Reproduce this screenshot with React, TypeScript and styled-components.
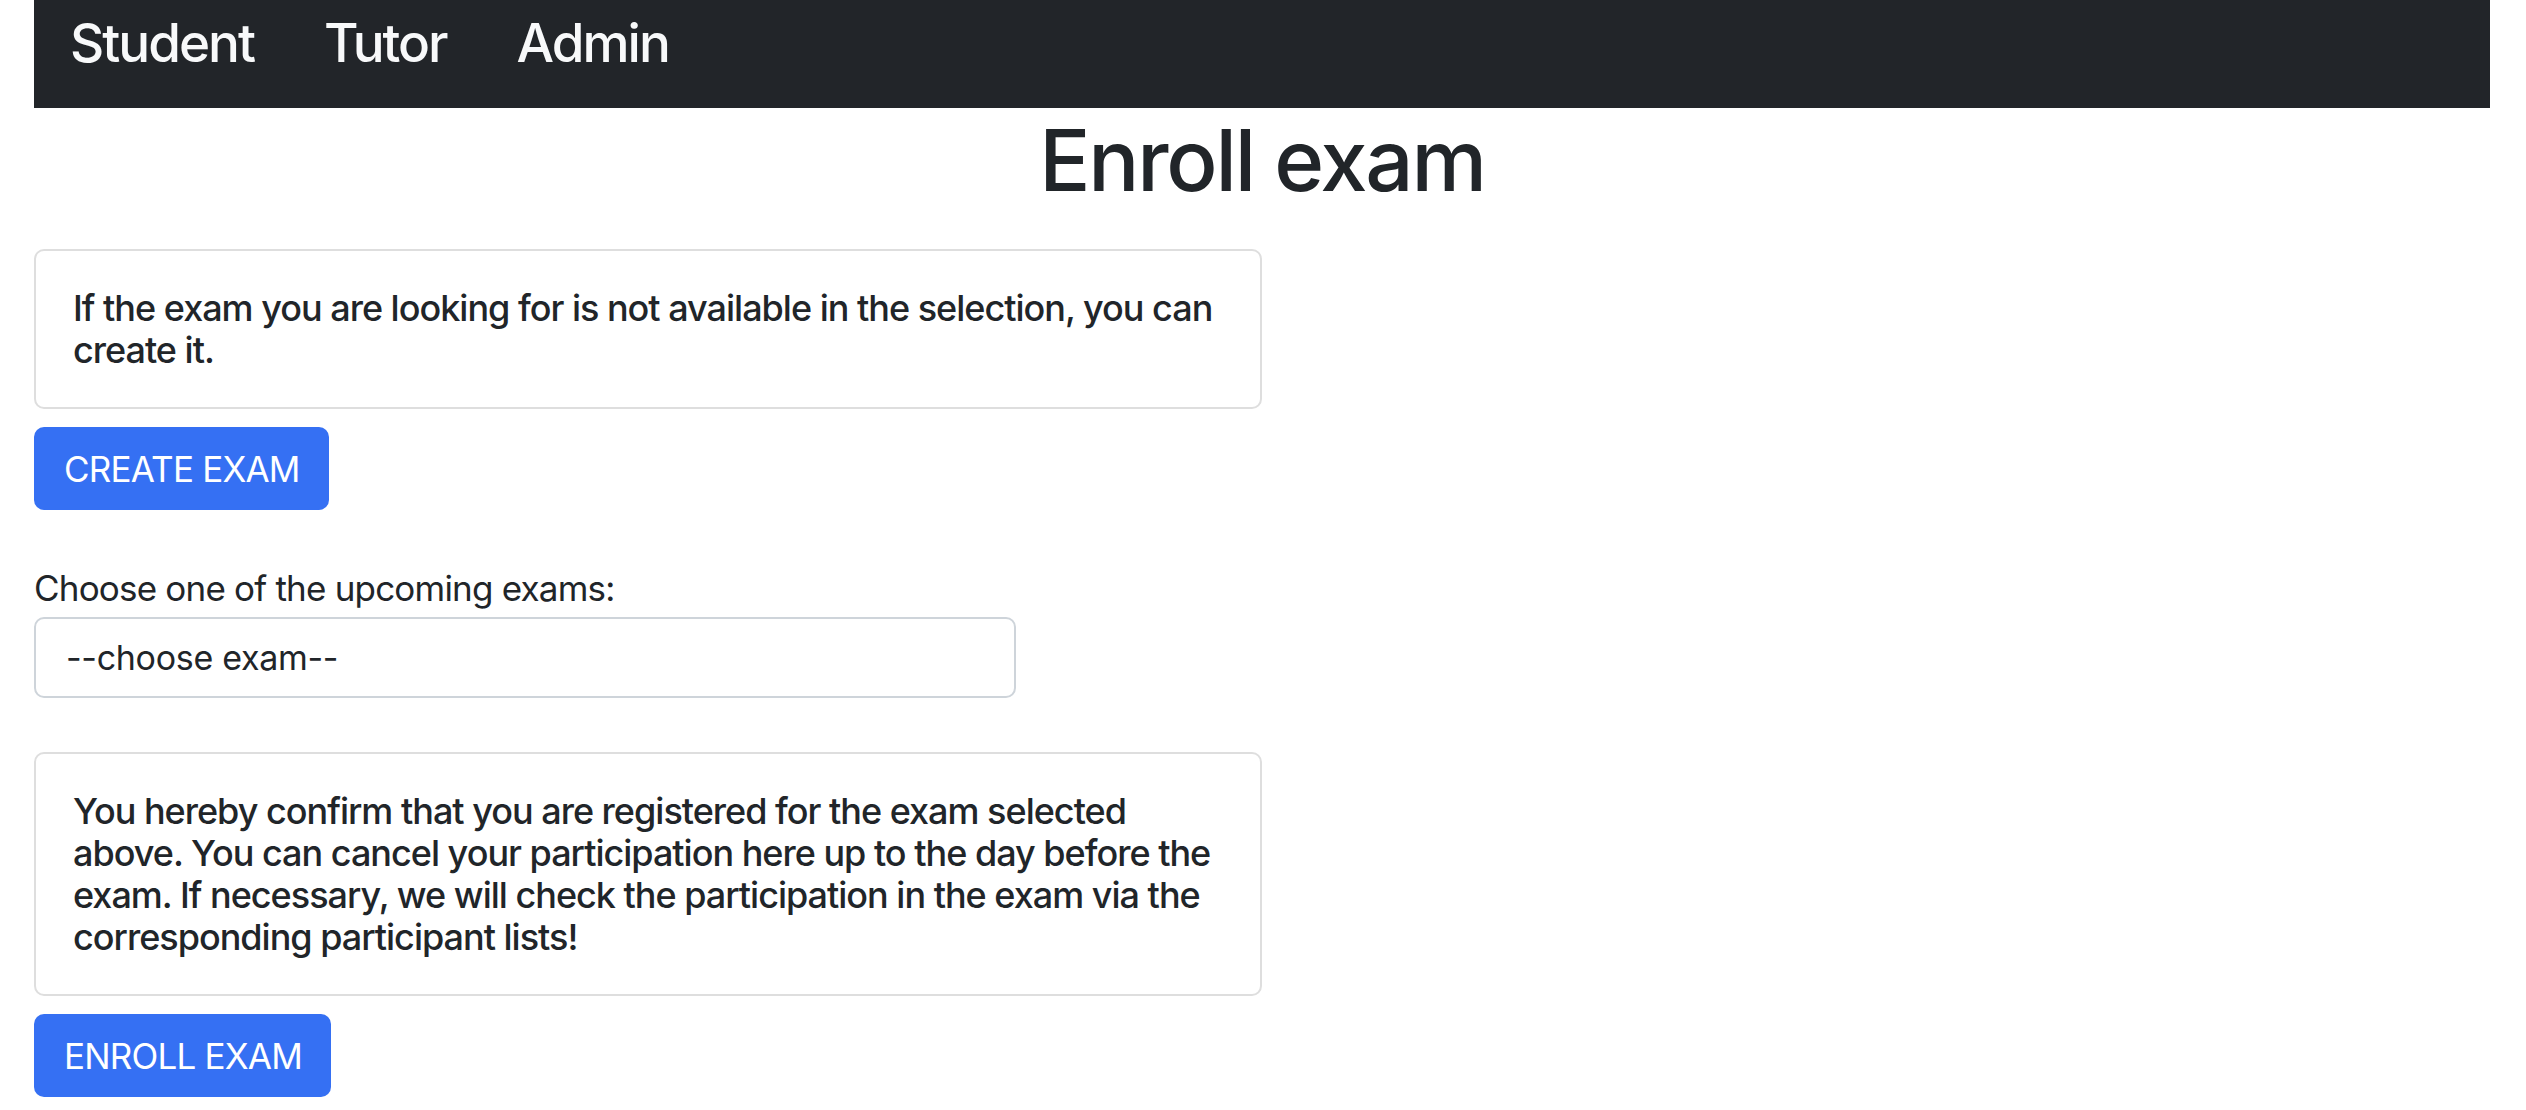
import React from "react";
import styled, { createGlobalStyle } from "styled-components";

const GlobalStyle = createGlobalStyle`
  html, body {
    margin: 0;
    padding: 0;
    background: #ffffff;
  }
  body {
    font-family: Inter, "Noto Sans", "Liberation Sans", sans-serif;
    color: #212529;
  }
`;

const Page = styled.div`
  padding: 0 36px 0 34px;
`;

const NavBar = styled.nav`
  height: 108px;
  box-sizing: border-box;
  background-color: #222529;
  display: flex;
  align-items: flex-start;
  gap: 70px;
  padding: 11px 0 0 36px;
`;

const NavLink = styled.a`
  color: #f8f9fa;
  font-size: 53px;
  line-height: 64px;
  font-weight: 500;
  letter-spacing: -2px;
  text-decoration: none;
  cursor: pointer;
`;

const Title = styled.h1`
  margin: 2px 0 37px;
  text-align: center;
  font-size: 85px;
  line-height: 102px;
  font-weight: 500;
  letter-spacing: -2.2px;
`;

const Row = styled.div`
  display: grid;
  grid-template-columns: 1fr 1fr;
`;

const Column = styled.div`
  display: flex;
  flex-direction: column;
  align-items: flex-start;
`;

const Card = styled.div`
  box-sizing: border-box;
  width: 100%;
  border: 2px solid #dedede;
  border-radius: 10px;
  padding: 36px 38px 36px 37px;
  font-size: 36px;
  line-height: 42px;
  font-weight: 500;
  letter-spacing: -1px;
`;

type ButtonProps = {
  $gapBottom?: number;
};

const Button = styled.button<ButtonProps>`
  margin-top: 18px;
  margin-bottom: ${(props) => props.$gapBottom ?? 0}px;
  height: 83px;
  padding: 0 29px 0 30px;
  border: none;
  border-radius: 10px;
  background-color: #3570f3;
  color: #ffffff;
  font-family: inherit;
  font-size: 35px;
  font-weight: 400;
  letter-spacing: -0.8px;
  cursor: pointer;
`;

const Label = styled.label`
  font-size: 35px;
  line-height: 42px;
  font-weight: 400;
  letter-spacing: -0.8px;
  margin-bottom: 8px;
`;

const Select = styled.select`
  appearance: none;
  -webkit-appearance: none;
  box-sizing: border-box;
  width: 80%;
  height: 81px;
  padding: 0 30px;
  border: 2px solid #ced4da;
  border-radius: 10px;
  background: #ffffff;
  color: #212529;
  font-family: inherit;
  font-size: 34px;
  letter-spacing: -0.3px;
  margin-bottom: 54px;
`;

const App = () => {
  return (
    <>
      <GlobalStyle />
      <Page>
        <NavBar>
          <NavLink>Student</NavLink>
          <NavLink>Tutor</NavLink>
          <NavLink>Admin</NavLink>
        </NavBar>

        <Title>Enroll exam</Title>

        <Row>
          <Column>
            <Card>
              If the exam you are looking for is not available in the
              selection, you can create it.
            </Card>
            <Button $gapBottom={57}>CREATE EXAM</Button>

            <Label htmlFor="exam">Choose one of the upcoming exams:</Label>
            <Select id="exam" defaultValue="">
              <option value="">--choose exam--</option>
            </Select>

            <Card>
              You hereby confirm that you are registered for the exam selected
              above. You can cancel your participation here up to the day
              before the exam. If necessary, we will check the participation
              in the exam via the corresponding participant lists!
            </Card>
            <Button>ENROLL EXAM</Button>
          </Column>
        </Row>
      </Page>
    </>
  );
};

export default App;
